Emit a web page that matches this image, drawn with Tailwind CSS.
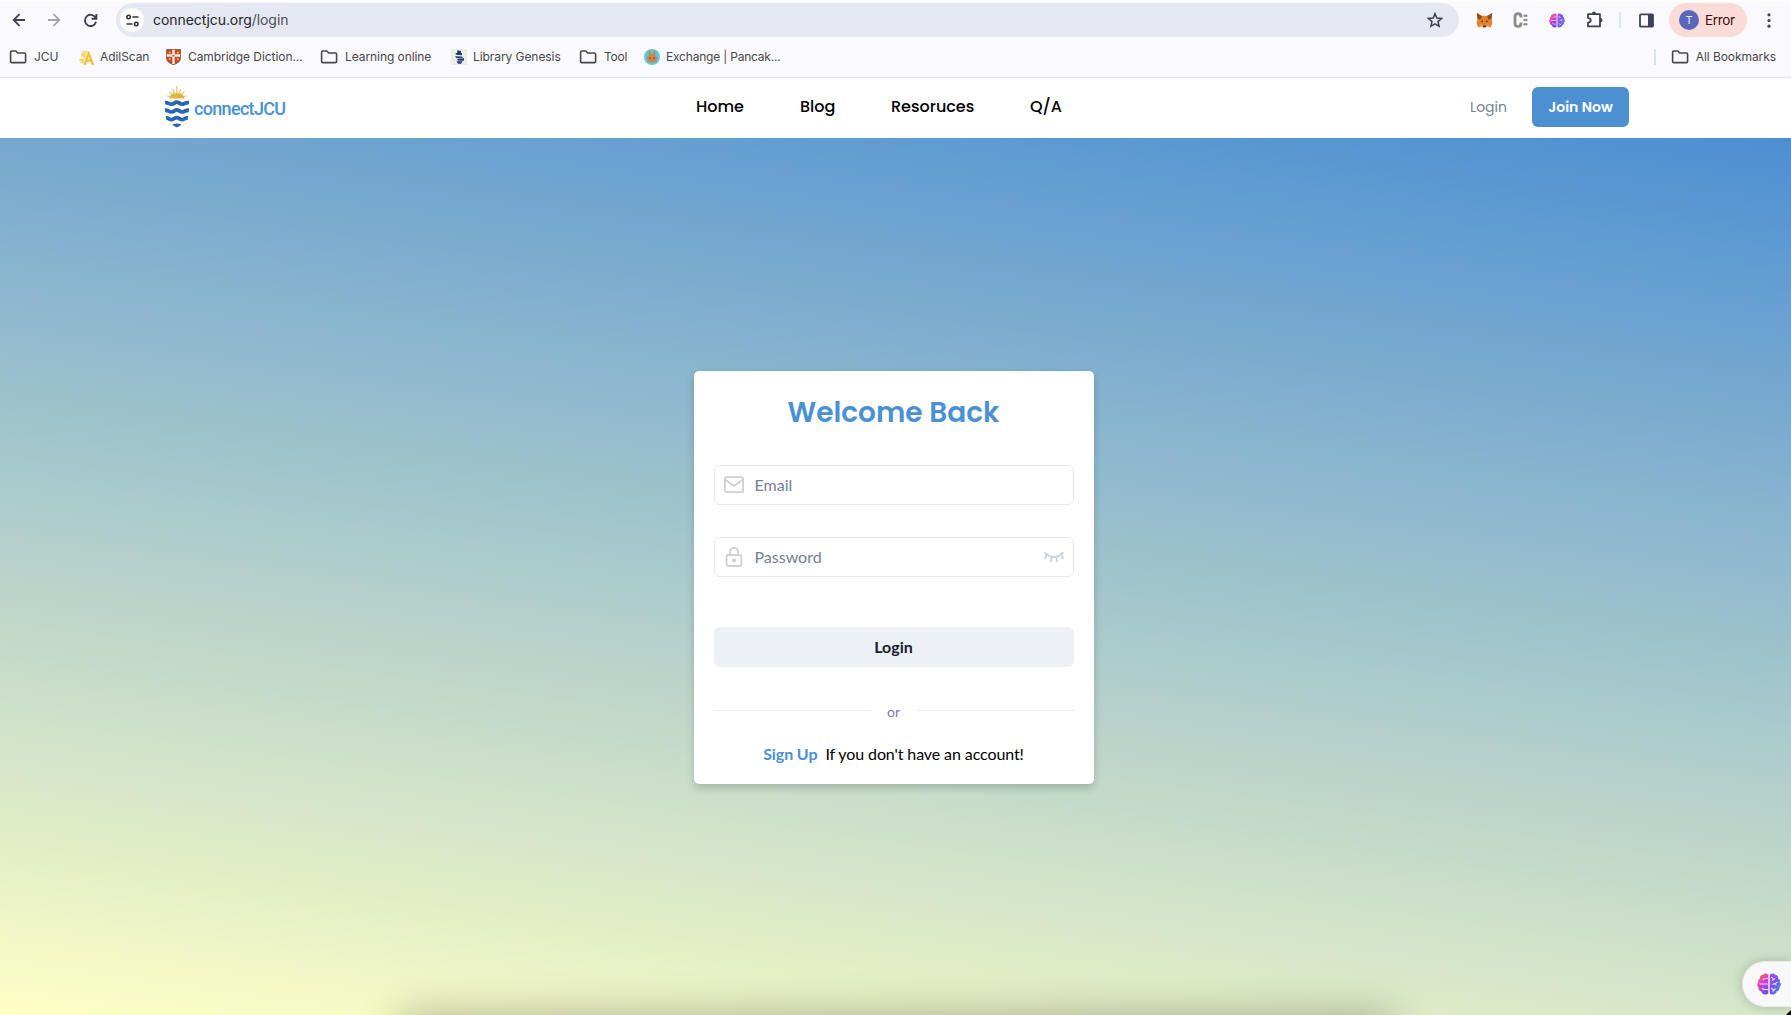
<!DOCTYPE html>
<html lang="en">
<head>
<meta charset="utf-8">
<title>connectJCU</title>
<script src="https://cdn.jsdelivr.net/npm/@tailwindcss/browser@4"></script>
</head>
<body class="h-screen overflow-hidden flex flex-col font-['Inter',sans-serif]">
<svg class="absolute size-0" aria-hidden="true">
  <defs>
    <linearGradient id="brainL" x1="0" y1="0" x2="0.5" y2="1"><stop offset="0" stop-color="#f7a035"/><stop offset=".22" stop-color="#ee6a72"/><stop offset=".5" stop-color="#df3fc4"/><stop offset="1" stop-color="#7a4cf0"/></linearGradient>
    <linearGradient id="brainR" x1="0" y1="0" x2="1" y2="1"><stop offset="0" stop-color="#b44be0"/><stop offset=".5" stop-color="#7553ee"/><stop offset="1" stop-color="#35a2f5"/></linearGradient>
    <symbol id="folder" viewBox="0 0 18 14"><path d="M1.6 2.2C1.6 1.5 2.1 1 2.8 1H6.8L8.7 3H15.4C16.1 3 16.6 3.5 16.6 4.2V11.4C16.6 12.1 16.1 12.6 15.4 12.6H2.8C2.1 12.6 1.6 12.1 1.6 11.4Z" fill="none" stroke="#474747" stroke-width="1.6"/></symbol>
    <symbol id="brain" viewBox="0 0 24 22">
      <path d="M11.3 2.2C10.6.2 7.2-.3 6 1.8 3.8 1.6 2.6 3.6 3 5.4 1.2 6 .8 8 1.4 9.2-.3 10.4-.2 13 1.5 14.2 1.2 16.6 2.4 18 4.2 18.2 5 21.8 9.6 22.6 11.3 20.3Z" fill="url(#brainL)"/>
      <path d="M12.7 2.2C13.4.2 16.8-.3 18 1.8 20.2 1.6 21.4 3.6 21 5.4 22.8 6 23.2 8 22.6 9.2 24.3 10.4 24.2 13 22.5 14.2 22.8 16.6 21.6 18 19.8 18.2 19 21.8 14.4 22.6 12.7 20.3Z" fill="url(#brainR)"/>
      <path d="M11 5.5H8Q6.5 5.5 6 7M2.5 11H11M5 15Q6 17 8.5 16.5H11M14.5 4L16 6M15 7.5L18 5.5M15.5 11.5L18.5 10.2 20.5 9M18.5 10.2L19 12.5M14.5 15L16.5 17M15.5 18.5L18.5 15.5" fill="none" stroke="#fff" stroke-opacity=".8" stroke-width="1.1"/>
    </symbol>
  </defs>
</svg>

<!-- Browser toolbar -->
<header class="h-[78px] shrink-0 bg-[#faf9fe] border-t-2 border-t-white border-b border-b-[#e2e2ef] text-[#474747]">
  <div class="h-9 flex items-center">
    <svg class="ml-3 w-3.5 h-4 shrink-0" viewBox="0 0 14 16" fill="none" stroke="#3d4257" stroke-width="1.9"><path d="M13 8H2M7.5 2.2L1.7 8l5.8 5.8"/></svg>
    <svg class="ml-[21px] w-3.5 h-4 shrink-0" viewBox="0 0 14 16" fill="none" stroke="#a3a4ae" stroke-width="1.8"><path d="M1 8H12M6.5 2.2L12.3 8l-5.8 5.8"/></svg>
    <svg class="ml-[22px] size-[15px] shrink-0" viewBox="0 0 15 15" fill="none" stroke="#3d4257" stroke-width="1.9"><path d="M12.5 4.8A5.6 5.6 0 1 0 13 8.7M13.4 1V5.8H8.6"/></svg>
    <div class="ml-[18px] w-[1343px] h-[34px] rounded-full bg-[#e5e8f1] flex items-center pl-1 pr-4">
      <div class="size-6 rounded-full bg-white grid place-items-center">
        <svg class="size-[13px]" viewBox="0 0 13 13" fill="none" stroke="#30323a" stroke-width="1.6"><circle cx="2.6" cy="3" r="1.7"/><path d="M6.3 3H12.5M.6 10H6.5"/><circle cx="10.2" cy="10" r="1.7"/></svg>
      </div>
      <div class="ml-[9px] text-[14px] tracking-[-0.06px] leading-5 text-[#24262b]">connectjcu.org<span class="text-[#4c5059]">/login</span></div>
      <svg class="ml-auto size-4" viewBox="0 0 16 16" fill="none" stroke="#3d3f4c" stroke-width="1.5" stroke-linejoin="miter"><path d="M8 1.7L9.8 6.1L14.6 6.5L11 9.6L12.1 14.3L8 11.8L3.9 14.3L5 9.6L1.4 6.5L6.2 6.1Z"/></svg>
    </div>
    <!-- extensions -->
    <svg class="ml-[17px] size-[17px] shrink-0" viewBox="0 0 17 17"><path d="M.8 1L6 3.8H11L16.2 1 15.6 7 16.3 11 14.8 15.4 11 14.2 9.6 15.8H7.4L6 14.2 2.2 15.4.7 11 1.4 7Z" fill="#e57f2c"/><path d="M.8 1L6 4.4 4.5 7.5 1.5 7ZM16.2 1L11 4.4 12.5 7.5 15.5 7Z" fill="#8b5226"/><path d="M4.6 9L6.8 8.6 6.8 10.4ZM12.4 9L10.2 8.6 10.2 10.4ZM7.2 13.4H9.8V15H7.2Z" fill="#31343c"/><path d="M2 14.5L6 11.5 6.5 14Z" fill="#f09a4a"/><path d="M15 14.5L11 11.5 10.5 14Z" fill="#f09a4a"/></svg>
    <svg class="ml-5 w-[15px] h-4 shrink-0" viewBox="0 0 15 16"><path d="M8 5.5V4.6Q8 1.7 5 1.7T2 4.6V11.4Q2 14.3 5 14.3T8 11.4V10.5" fill="none" stroke="#8d8d8d" stroke-width="2.8"/><g fill="#8d8d8d"><circle cx="11.6" cy="3.7" r="1.2"/><circle cx="13.3" cy="3.7" r="1.2"/><circle cx="11.6" cy="8" r="1.2"/><circle cx="13.3" cy="8" r="1.2"/><circle cx="11.6" cy="12.3" r="1.2"/><circle cx="13.3" cy="12.3" r="1.2"/></g></svg>
    <svg class="ml-[21px] w-4 h-[15px] shrink-0"><use href="#brain"/></svg>
    <svg class="ml-[21px] size-[18px] shrink-0" viewBox="0 0 18 18"><path d="M2 3.2H14V15.4H2V11.7Q4.7 11.3 4.7 9.3T2 6.9Z" fill="none" stroke="#3d4257" stroke-width="1.8" stroke-linejoin="round"/><path d="M5.8 3A2.2 2.5 0 0 1 10.2 3ZM14 7A2.5 2.2 0 0 1 14 11.4Z" fill="#3d4257"/></svg>
    <div class="ml-[15px] w-0.5 h-4 rounded bg-[#d5e2fb] shrink-0"></div>
    <svg class="ml-[18px] size-[15px] shrink-0" viewBox="0 0 15 15"><rect x="1" y="1.3" width="13" height="12.4" rx="1" fill="none" stroke="#3d4257" stroke-width="1.8"/><path d="M9 1h5v13H9z" fill="#3d4257"/></svg>
    <div class="ml-[15px] w-[78px] h-[34px] rounded-full bg-[#f9dcd8] flex items-center pl-2.5 gap-1.5 shrink-0">
      <div class="size-5 rounded-full bg-[#5b68ba] text-[#e7e8f6] text-[11px] grid place-items-center">T</div>
      <div class="text-[13.5px] text-[#430c0a] tracking-[-0.35px]">Error</div>
    </div>
    <svg class="ml-5 w-1 h-[15px] shrink-0" viewBox="0 0 4 15" fill="#3d4257"><circle cx="2" cy="1.8" r="1.6"/><circle cx="2" cy="7.5" r="1.6"/><circle cx="2" cy="13.2" r="1.6"/></svg>
  </div>
  <div class="h-[38px] flex items-center pl-[9px] text-[12px] leading-4 tracking-[-0.07px] whitespace-nowrap">
    <svg class="w-[18px] h-3.5"><use href="#folder"/></svg><span class="ml-[7px] w-11">JCU</span>
    <svg class="w-4 h-[17px]" viewBox="0 0 16 17"><path d="M5 2l3-1 3 2-1 5-3 3-1 4-4-1-1-3 3-2-1-3z" fill="#f7e3a0"/><path d="M6 2.5Q3 4 4.8 7M1.5 11Q5 9 4.5 14M7 4Q5 7 7 8" stroke="#efc74c" fill="none"/><path d="M6.5 15.8L10.8 4.5 15 15.8M8 11.7h5.5" stroke="#ecc03a" stroke-width="2.2" fill="none"/></svg><span class="ml-1.5 w-[66px]">AdilScan</span>
    <svg class="w-[15px] h-4" viewBox="0 0 15 16"><path d="M.5.5H14.5V9Q14.5 13.5 7.5 15.7 .5 13.5.5 9Z" fill="#c34a2c" stroke="#87512f" stroke-width=".8"/><path d="M7.5.8V15M.8 6.5H14.2" stroke="#f8eee3" stroke-width="2.4"/><path d="M3 3l1.5 1M11 3l1.5 1M3 9.5l1.5 1M11 9.5l1.5 1" stroke="#eeb351" stroke-width="1.6"/><path d="M6.5 6h2v1.5h-2z" fill="#a74534"/></svg><span class="ml-[7px] w-[132px]">Cambridge Diction...</span>
    <svg class="w-[18px] h-3.5"><use href="#folder"/></svg><span class="ml-[7px] w-[105px]">Learning online</span>
    <svg class="w-4 h-4 ml-px" viewBox="0 0 16 16"><path d="M0 0h16v16H0z" fill="#edeee0"/><path d="M6.5 1.2l3.5.8v2H6zM4.5 4h6.5v2.2L5 5.8zM4 7.2l7 .3.8 1.5-6.3.2zM6 10l7-.8v2.5H7zM5.5 12.3h6l-1.4 2.5H7z" fill="#1d3d83"/></svg><span class="ml-[6px] w-[106px]">Library Genesis</span>
    <svg class="w-[18px] h-3.5"><use href="#folder"/></svg><span class="ml-[7px] w-10 tracking-[-0.2px]">Tool</span>
    <svg class="w-4 h-4" viewBox="0 0 16 16"><circle cx="8" cy="8" r="8" fill="#5cc9d5"/><path d="M4.5 2.2Q6-.2 7.3 5H8.7Q10-.2 11.5 2.2L11 6.3Q13.4 7.5 13 10.4 12 13.6 8 13.6T3 10.4Q2.6 7.5 5 6.3Z" fill="#cb8449"/><path d="M6 8.2v1.8M10 8.2v1.8" stroke="#633e2c"/></svg><span class="ml-1.5 tracking-[-0.2px]">Exchange | Pancak...</span>
    <div class="ml-auto w-0.5 h-4 bg-[#d5e2fb]"></div>
    <svg class="ml-[15px] w-[18px] h-3.5"><use href="#folder"/></svg><span class="ml-[7px] mr-[15px]">All Bookmarks</span>
  </div>
</header>

<!-- Site navigation -->
<nav class="h-[60px] shrink-0 bg-white flex items-center pb-[1.4px] pl-[164px] pr-[162px] font-['Poppins','Inter',sans-serif]">
  <div class="w-[532px] flex items-center">
    <svg class="w-[26px] h-[42px]" viewBox="0 0 26 42">
      <path d="M5 12.5Q6 7 12.8 7T20.5 12.5Z" fill="#e3b43d"/>
      <path d="M12.8 0V8M8.8 3L10.4 8M16.8 3L15.2 8M5.3 5.6L8.5 9.4M20.3 5.6L17 9.4M3.2 9.7L7 11.2M22.4 9.7L18.7 11.2" stroke="#e7bf55" stroke-width="1.1"/>
      <g fill="none" stroke="#2965b1" stroke-width="3.8"><path d="M1 16.6C4 16.2 5 18.4 7.6 18.2S10.6 16.2 12.8 16.2 15.8 18.2 18 18.2 21.5 16.2 25 16.6"/><path d="M1 24.3C4 23.9 5 26.1 7.6 25.9S10.6 23.9 12.8 23.9 15.8 25.9 18 25.9 21.5 23.9 25 24.3"/><path d="M2 32C4.5 31.6 5.5 33.8 7.8 33.6S10.6 31.6 12.8 31.6 15.8 33.6 18 33.6 21 31.6 24 32"/></g>
      <path d="M8.4 38.2Q12.8 36.8 17.4 38.2 16 40.6 12.8 41.6 9.8 40.6 8.4 38.2Z" fill="#2965b1"/>
    </svg>
    <span class="ml-1 mt-1 text-[18px] font-medium tracking-[-0.68px] leading-5 text-[#4a91d4] font-['Roboto',sans-serif]">connectJCU</span>
  </div>
  <div class="flex text-base font-medium leading-6 text-black">
    <a class="w-[104px]">Home</a><a class="w-[91px]">Blog</a><a class="w-[139px]">Resoruces</a><a>Q/A</a>
  </div>
  <a class="ml-auto text-sm text-[#76829a]">Login</a>
  <a class="ml-[25px] w-[97px] h-10 rounded-md bg-[#4d90d2] text-white text-sm font-semibold flex items-center justify-center">Join Now</a>
</nav>

<!-- Login page -->
<main class="relative flex-1 overflow-hidden bg-[linear-gradient(8deg,#feffc5,#4d8fd3)] pt-[233px] pl-[693.5px] font-['Lato',sans-serif]">
  <section class="w-[400px] h-[413px] rounded-[5px] bg-white px-5 shadow-[0_4px_8px_rgba(0,0,0,0.18)] flex flex-col">
    <h1 class="mt-[21px] text-center text-[28px] leading-[42px] font-semibold text-[#4a91d4] font-['Poppins','Inter',sans-serif]">Welcome Back</h1>
    <div class="mt-[31.4px] h-10 border border-[#e4e9f1] rounded-md flex items-center px-[9px]">
      <svg class="size-5" viewBox="0 0 20 20" fill="none" stroke="#d0d0d0" stroke-width="1.8" stroke-linejoin="round"><rect x=".9" y="2.2" width="18.2" height="15" rx="1.8"/><path d="M1 4.6L10 11 19 4.6"/></svg>
      <span class="ml-[11px] text-base text-[#748096]">Email</span>
    </div>
    <div class="mt-8 h-10 border border-[#e4e9f1] rounded-md flex items-center px-[9px]">
      <svg class="size-5" viewBox="0 0 20 20" fill="none" stroke="#d0d0d0" stroke-width="1.8"><rect x="2.6" y="8" width="14.8" height="11" rx="1.8"/><path d="M6 8V4.8a4 4 0 0 1 8 0V8"/><circle cx="10" cy="13.5" r="1.2" fill="#d0d0d0"/></svg>
      <span class="ml-[11px] text-base text-[#748096]">Password</span>
      <svg class="ml-auto w-5 h-3" viewBox="0 0 20 12" fill="none" stroke="#c9d4df" stroke-width="1.9"><path d="M.6 1.2Q10 10.8 19.4 1.2M3 3.2L.8 7.8M17 3.2l2.2 4.6M7.6 5.9L6.8 10.8M12.4 5.9l.8 4.9"/></svg>
    </div>
    <button class="mt-[49.6px] h-10 shrink-0 rounded-md bg-[#edf1f6] text-base font-bold text-[#1b2030]">Login</button>
    <div class="mt-[34px] h-5 flex items-center gap-4 text-sm text-[#76829a]"><i class="flex-1 h-px bg-[#eaedf1]"></i><span class="w-[13px] flex justify-center leading-5 pt-0.5">or</span><i class="flex-1 h-px bg-[#eaedf1]"></i></div>
    <p class="mt-[21px] text-center text-base leading-6 tracking-[-0.1px] text-black"><a class="font-bold text-[#4a91d4] mr-2">Sign Up</a>If you don't have an account!</p>
  </section>
  <!-- soft shadow along the bottom edge -->
  <div class="absolute left-[400px] top-[880px] w-[992px] h-10 shadow-[0_0_44px_rgba(0,0,0,0.32)]"></div>
  <!-- floating assistant tab -->
  <div class="absolute right-0 bottom-2 w-[49px] h-[46px] rounded-l-full bg-[#f8f8f8] border border-r-0 border-[#e9ece7] shadow-[0_0_12px_rgba(0,0,0,0.2)] flex items-center pl-3.5">
    <svg class="w-6 h-[22px]"><use href="#brain"/></svg>
  </div>
  <svg class="absolute right-0 bottom-0 size-[5px]" viewBox="0 0 5 5"><path d="M5 0V5H0Z" fill="#000"/></svg>
</main>
</body>
</html>
